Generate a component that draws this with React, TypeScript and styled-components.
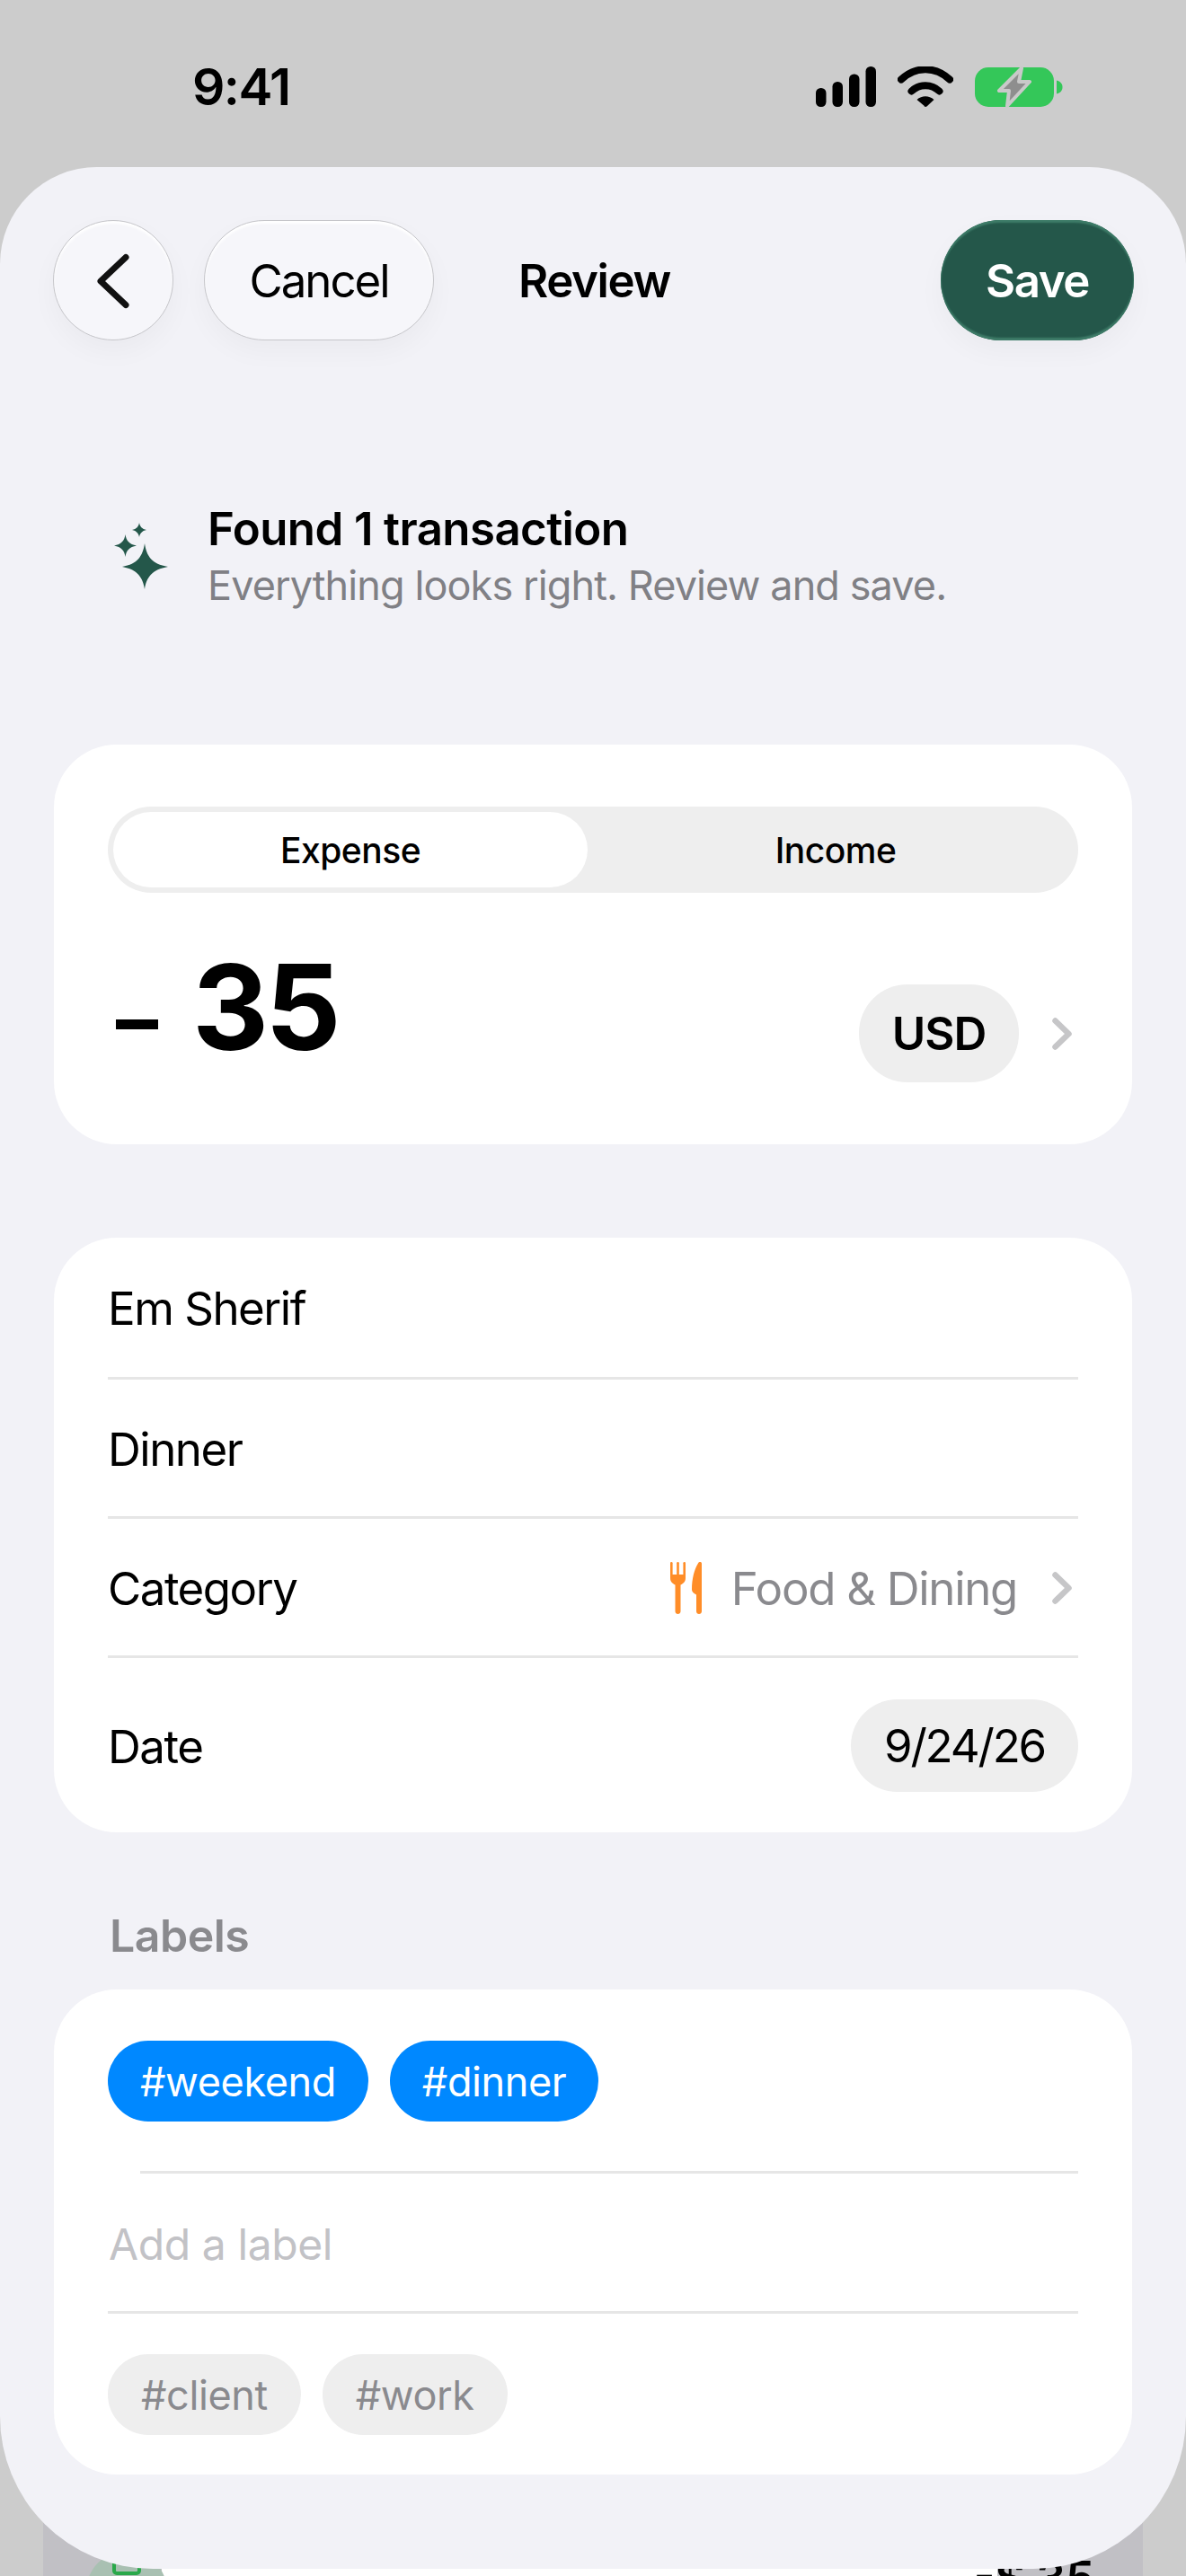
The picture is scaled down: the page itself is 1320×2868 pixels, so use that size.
import React from "react";
import styled, { createGlobalStyle } from "styled-components";

const Global = createGlobalStyle`
  html, body { margin: 0; padding: 0; background: #cccccc; }
  body { font-family: Inter, "Noto Sans", "Liberation Sans", sans-serif; color: #000; }
  * { box-sizing: border-box; }
`;

const Stage = styled.div`
  position: relative;
  width: 1320px;
  height: 2868px;
  overflow: hidden;
  background: #cccccc;
  display: flex;
  flex-direction: column;
`;

const StatusBar = styled.div`
  height: 186px;
  flex: none;
  display: flex;
  align-items: flex-start;
  justify-content: space-between;
  padding: 68px 137px 0 214px;
`;
const Time = styled.span`
  font-size: 57px;
  line-height: 58px;
  font-weight: 600;
  letter-spacing: -1.6px;
`;
const StatusIcons = styled.div`
  display: flex;
  align-items: flex-start;
  gap: 24px;
  padding-top: 6px;
`;

const Behind = styled.div`
  position: absolute;
  left: 48px;
  top: 2700px;
  width: 1224px;
  height: 168px;
  background: #c1c0c5;
`;
const BehindStrip = styled.div`
  position: absolute;
  left: 132px;
  right: 162px;
  top: 160px;
  height: 8px;
  background: #ffffff;
`;
const BehindBadge = styled.div`
  position: absolute;
  left: 48px;
  top: 140px;
  width: 90px;
  height: 90px;
  border-radius: 50%;
  background: #a9c0b2;
`;
const BehindGlyph = styled.div`
  position: absolute;
  left: 77px;
  top: 130px;
  width: 32px;
  height: 37px;
  border: 4px solid #2aa84a;
  border-radius: 0 0 5px 5px;
`;
const BehindName = styled.span`
  position: absolute;
  left: 172px;
  top: 160px;
  font-size: 51px;
  line-height: 62px;
`;
const BehindAmount = styled.span`
  position: absolute;
  right: 54px;
  top: 139px;
  font-size: 51px;
  line-height: 62px;
  font-weight: 600;
`;

const Sheet = styled.main`
  position: relative;
  z-index: 1;
  flex: none;
  width: 1320px;
  height: 2674px;
  padding: 59px 60px 0;
  background: #f2f2f7;
  border-radius: 108px 108px 170px 170px;
  display: flex;
  flex-direction: column;
`;

const Nav = styled.header`
  display: flex;
  align-items: center;
  height: 134px;
  margin: 0 -2px 0 -1px;
`;
const GlassButton = styled.button<{ $w: number }>`
  width: ${(p) => p.$w}px;
  height: 134px;
  flex: none;
  border-radius: 67px;
  border: 1.5px solid #c6c6ca;
  background: #f6f6fa;
  box-shadow: 0 12px 30px rgba(0, 0, 0, 0.035), inset 0 3px 3px #ffffff;
  display: flex;
  align-items: center;
  justify-content: center;
  font: 400 51px/62px Inter, sans-serif;
  letter-spacing: -2px;
  color: #000;
  padding: 2px 0 0;
`;
const CancelButton = styled(GlassButton)`
  margin-left: 34px;
`;
const NavTitle = styled.h1`
  margin: 2px 0 0 94px;
  font-size: 51px;
  line-height: 62px;
  font-weight: 600;
  letter-spacing: -1.4px;
`;
const SaveButton = styled.button`
  margin-left: auto;
  width: 215px;
  height: 134px;
  border: none;
  border-radius: 67px;
  background: #24574a;
  box-shadow: 0 12px 30px rgba(0, 0, 0, 0.035), inset 0 3px 2px #3f7d69, inset 0 -3px 2px #3f7d69;
  color: #fff;
  font: 600 51px/62px Inter, sans-serif;
  letter-spacing: -1.4px;
  padding: 2px 0 0;
`;

const Intro = styled.section`
  display: flex;
  align-items: center;
  gap: 44px;
  margin-top: 179px;
  padding-left: 67px;
`;
const IntroText = styled.div`
  display: flex;
  flex-direction: column;
  gap: 4px;
`;
const IntroTitle = styled.h2`
  margin: 0;
  font-size: 51px;
  line-height: 62px;
  font-weight: 600;
  letter-spacing: -0.6px;
`;
const IntroSub = styled.p`
  margin: 0;
  font-size: 45px;
  line-height: 56px;
  color: #808085;
  letter-spacing: -0.9px;
`;

const Card = styled.section<{ $top: number }>`
  margin-top: ${(p) => p.$top}px;
  background: #ffffff;
  border-radius: 70px;
  padding: 0 60px;
  display: flex;
  flex-direction: column;
`;

const Segment = styled.div`
  margin-top: 69px;
  height: 96px;
  padding: 6px;
  border-radius: 48px;
  background: #eeeeee;
  display: grid;
  grid-template-columns: 528px 528px;
  column-gap: 12px;
`;
const SegmentItem = styled.div<{ $active?: boolean }>`
  border-radius: 42px;
  background: ${(p) => (p.$active ? "#ffffff" : "transparent")};
  display: flex;
  align-items: center;
  justify-content: center;
  font-size: 39px;
  font-weight: 500;
  letter-spacing: -0.5px;
`;

const AmountRow = styled.div`
  margin-top: 61px;
  margin-bottom: 69px;
  height: 150px;
  display: flex;
  justify-content: space-between;
  align-items: flex-start;
`;
const Amount = styled.div`
  padding-left: 9px;
  display: flex;
  align-items: baseline;
  font-size: 132px;
  line-height: 132px;
  font-weight: 700;
  letter-spacing: -4px;
`;
const Minus = styled.span`
  font-size: 94px;
  margin-right: 38px;
  letter-spacing: 0;
`;
const Currency = styled.div`
  margin-top: 41px;
  display: flex;
  align-items: center;
  gap: 37px;
  padding-right: 7px;
`;
const CurrencyPill = styled.span`
  width: 178px;
  height: 109px;
  border-radius: 54px;
  background: #eeeeee;
  display: flex;
  align-items: center;
  justify-content: center;
  font-size: 51px;
  font-weight: 600;
  letter-spacing: -1px;
`;

const Row = styled.div<{ $h: number }>`
  height: ${(p) => p.$h}px;
  display: flex;
  align-items: center;
  justify-content: space-between;
  font-size: 51px;
  letter-spacing: -1.5px;
`;
const RowText = styled.span`
  padding-top: 2px;
`;
const Divider = styled.hr<{ $inset?: number }>`
  flex: none;
  width: auto;
  height: 3px;
  margin: 0 0 0 ${(p) => p.$inset ?? 0}px;
  border: none;
  background: #e6e6e6;
`;
const RowValue = styled.span`
  display: flex;
  align-items: center;
  padding: 2px 7px 0 0;
  color: #8a8a8e;
  letter-spacing: -1.3px;
`;
const ValueIcon = styled.svg`
  margin-right: 33px;
`;
const ValueChevron = styled.svg`
  margin-left: 39px;
`;
const DatePill = styled.span`
  width: 253px;
  height: 103px;
  border-radius: 52px;
  background: #eeeeee;
  display: flex;
  align-items: center;
  justify-content: center;
  letter-spacing: -2.2px;
`;

const SectionLabel = styled.h3`
  margin: 90px 0 35px;
  padding-left: 62px;
  font-size: 50px;
  line-height: 50px;
  font-weight: 600;
  color: #8a8a8e;
  letter-spacing: -0.5px;
`;
const ChipRow = styled.div<{ $top: number }>`
  margin-top: ${(p) => p.$top}px;
  display: flex;
  gap: 24px;
`;
const Chip = styled.span<{ $on?: boolean }>`
  height: 90px;
  padding: 0 ${(p) => (p.$on ? 36 : 37)}px;
  border-radius: 45px;
  background: ${(p) => (p.$on ? "#0088ff" : "#eeeeee")};
  color: ${(p) => (p.$on ? "#ffffff" : "#8a8a8e")};
  display: flex;
  align-items: center;
  font-size: 45px;
  letter-spacing: -0.4px;
`;
const AddLabel = styled.div`
  height: 153px;
  display: flex;
  align-items: center;
  padding: 4px 0 0 1px;
  font-size: 48px;
  color: #c2c2c6;
  letter-spacing: -0.4px;
`;
const InsetRule = styled(Divider)`
  flex: 1;
`;
const LabelsFoot = styled.div`
  height: 44px;
`;
const TopGap = styled.div`
  height: 57px;
`;

const Chevron = ({ as: As = "svg" }: { as?: any }) => (
  <As width="22" height="36" viewBox="0 0 22 36" fill="none">
    <path d="M3.5 3.5L18.5 18L3.5 32.5" stroke="#c6c6c8" strokeWidth="6.5" strokeLinecap="round" strokeLinejoin="round" />
  </As>
);

export default function App() {
  return (
    <Stage>
      <Global />
      <StatusBar>
        <Time>9:41</Time>
        <StatusIcons>
          <svg width="67" height="45" viewBox="0 0 67 45" fill="#000">
            <rect x="0" y="24" width="11.5" height="21" rx="5.5" />
            <rect x="18.5" y="17" width="11.5" height="28" rx="5.5" />
            <rect x="37" y="8.5" width="11.5" height="36.5" rx="5.5" />
            <rect x="55.5" y="0" width="11.5" height="45" rx="5.5" />
          </svg>
          <svg width="62" height="46" viewBox="0 0 62 46" fill="none">
            <path d="M4 14.5C20 -0.5 42 -0.5 58 14.5" stroke="#000" strokeWidth="8" strokeLinecap="round" />
            <path d="M15.5 27.5C24 19 38 19 46.5 27.5" stroke="#000" strokeWidth="8" strokeLinecap="round" />
            <path d="M31 45L21.5 37C27 32 35 32 40.5 37L33 44C32 45.2 30 45.2 29 44Z" fill="#000" />
          </svg>
          <svg width="98" height="46" viewBox="0 0 98 46" fill="none">
            <rect x="0" y="1" width="88" height="44" rx="15" fill="#34c759" />
            <path d="M91 15.5C95 16.5 97.5 19 97.5 23C97.5 27 95 29.5 91 30.5Z" fill="#34c759" />
            <path d="M52 2L27 27H38L36 44L61 17H49Z" fill="#8e8e8e" stroke="#c9c9c9" strokeWidth="4" strokeLinejoin="round" />
          </svg>
        </StatusIcons>
      </StatusBar>

      <Behind>
        <BehindStrip />
        <BehindBadge />
        <BehindGlyph />
        <BehindName>Groceries</BehindName>
        <BehindAmount>-$ 35</BehindAmount>
      </Behind>

      <Sheet>
        <Nav>
          <GlassButton $w={134} aria-label="Back">
            <svg width="38" height="62" viewBox="0 0 38 62" fill="none">
              <path d="M33 4.500L5 31L33 57.500" stroke="#111" strokeWidth="7" strokeLinecap="round" strokeLinejoin="round" />
            </svg>
          </GlassButton>
          <CancelButton $w={256}>Cancel</CancelButton>
          <NavTitle>Review</NavTitle>
          <SaveButton>Save</SaveButton>
        </Nav>

        <Intro>
          <svg width="60" height="74" viewBox="0 0 60 74" fill="#24574a">
            <path d="M34 23C36 37 42 46 60 49C42 52 36 61 34 74C32 61 26 52 9 49C26 46 32 37 34 23Z" />
            <path d="M12.500 13C13.500 20 17 24 25 25.500C17 27 13.500 31 12.500 38C11.500 31 8 27 0 25.500C8 24 11.500 20 12.500 13Z" />
            <path d="M28 0C28.700 4 31 7 36 8C31 9 28.700 12 28 16C27.300 12 25 9 20 8C25 7 27.300 4 28 0Z" />
          </svg>
          <IntroText>
            <IntroTitle>Found 1 transaction</IntroTitle>
            <IntroSub>Everything looks right. Review and save.</IntroSub>
          </IntroText>
        </Intro>

        <Card $top={149}>
          <Segment>
            <SegmentItem $active>Expense</SegmentItem>
            <SegmentItem>Income</SegmentItem>
          </Segment>
          <AmountRow>
            <Amount>
              <Minus>–</Minus>
              <span>35</span>
            </Amount>
            <Currency>
              <CurrencyPill>USD</CurrencyPill>
              <Chevron />
            </Currency>
          </AmountRow>
        </Card>

        <Card $top={104}>
          <Row $h={155}><RowText>Em Sherif</RowText></Row>
          <Divider />
          <Row $h={152}><RowText>Dinner</RowText></Row>
          <Divider />
          <Row $h={152}>
            <RowText>Category</RowText>
            <RowValue>
              <ValueIcon width="35" height="58" viewBox="0 0 35 58" fill="#ff8d28">
                <rect x="0" y="0" width="2.6" height="18" rx="1.3" />
                <rect x="7.200" y="0" width="2.600" height="18" rx="1.300" />
                <rect x="14.400" y="0" width="2.600" height="18" rx="1.300" />
                <path d="M0 14H17V18C17 22 14.500 24 11.500 25.500V55C11.500 59 5.500 59 5.500 55V25.500C2.500 24 0 22 0 18Z" />
                <path d="M35 2C35 -0.500 32 -0.500 31 1.500C27 8 24 18 24 31C24 33 26 35 29 36.500V55C29 59 35 59 35 55Z" />
              </ValueIcon>
              Food &amp; Dining
              <Chevron as={ValueChevron} />
            </RowValue>
          </Row>
          <Divider />
          <Row $h={194}>
            <RowText>Date</RowText>
            <DatePill>9/24/26</DatePill>
          </Row>
        </Card>

        <SectionLabel>Labels</SectionLabel>
        <Card $top={0}>
          <TopGap />
          <ChipRow $top={0}>
            <Chip $on>#weekend</Chip>
            <Chip $on>#dinner</Chip>
          </ChipRow>
          <ChipRow $top={55}>
            <InsetRule $inset={36} />
          </ChipRow>
          <AddLabel>Add a label</AddLabel>
          <Divider />
          <ChipRow $top={45}>
            <Chip>#client</Chip>
            <Chip>#work</Chip>
          </ChipRow>
          <LabelsFoot />
        </Card>
      </Sheet>
    </Stage>
  );
}
